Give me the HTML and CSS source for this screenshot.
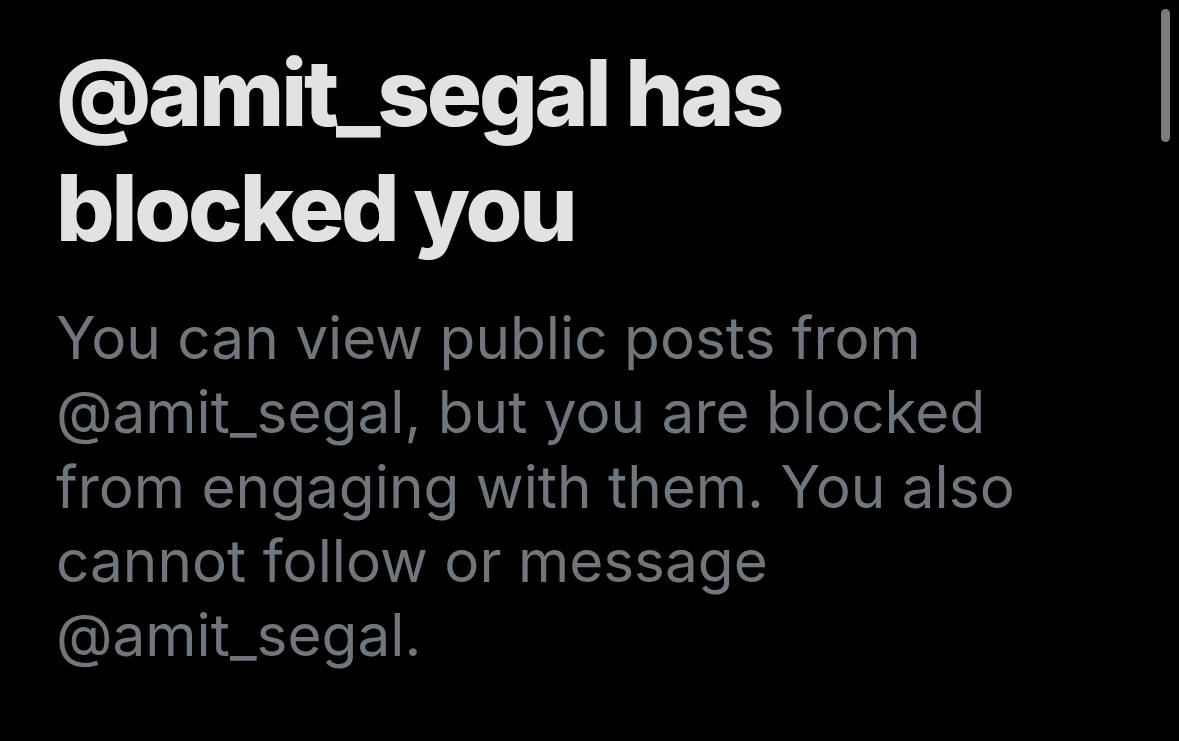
FILE: index.html
```html
<!DOCTYPE html>
<html lang="en">
<head>
<meta charset="utf-8">
<title>Blocked</title>
<link rel="stylesheet" href="styles.css">
</head>
<body>
<main class="screen">
  <section class="empty-state">
    <h1 class="title">@amit_segal has blocked you</h1>
    <p class="message">You can view public posts from @amit_segal, but you are blocked from engaging with them. You also cannot follow or message @amit_segal.</p>
  </section>
  <div class="scroll-indicator"></div>
</main>
</body>
</html>
```
FILE: styles.css
```css
html, body {
  margin: 0;
  padding: 0;
  background: #000;
}
.screen {
  position: relative;
  width: 1179px;
  height: 741px;
  overflow: hidden;
  background: #000;
}
.empty-state {
  display: flex;
  flex-direction: column;
  padding: 35px 0 0 56px;
  width: 1040px;
}
.title {
  margin: 0;
  font-family: Inter, "Noto Sans", sans-serif;
  font-weight: 800;
  font-size: 92px;
  line-height: 115px;
  letter-spacing: -3.2px;
  color: #e2e2e2;
}
.message {
  margin: 36px 0 0 0;
  font-family: Inter, "Noto Sans", sans-serif;
  font-weight: 400;
  font-size: 58.5px;
  line-height: 74.3px;
  color: #71767b;
}
.scroll-indicator {
  position: absolute;
  top: 9px;
  left: 1161px;
  width: 9px;
  height: 133px;
  border-radius: 5px;
  background: #7c7c7c;
}
```
